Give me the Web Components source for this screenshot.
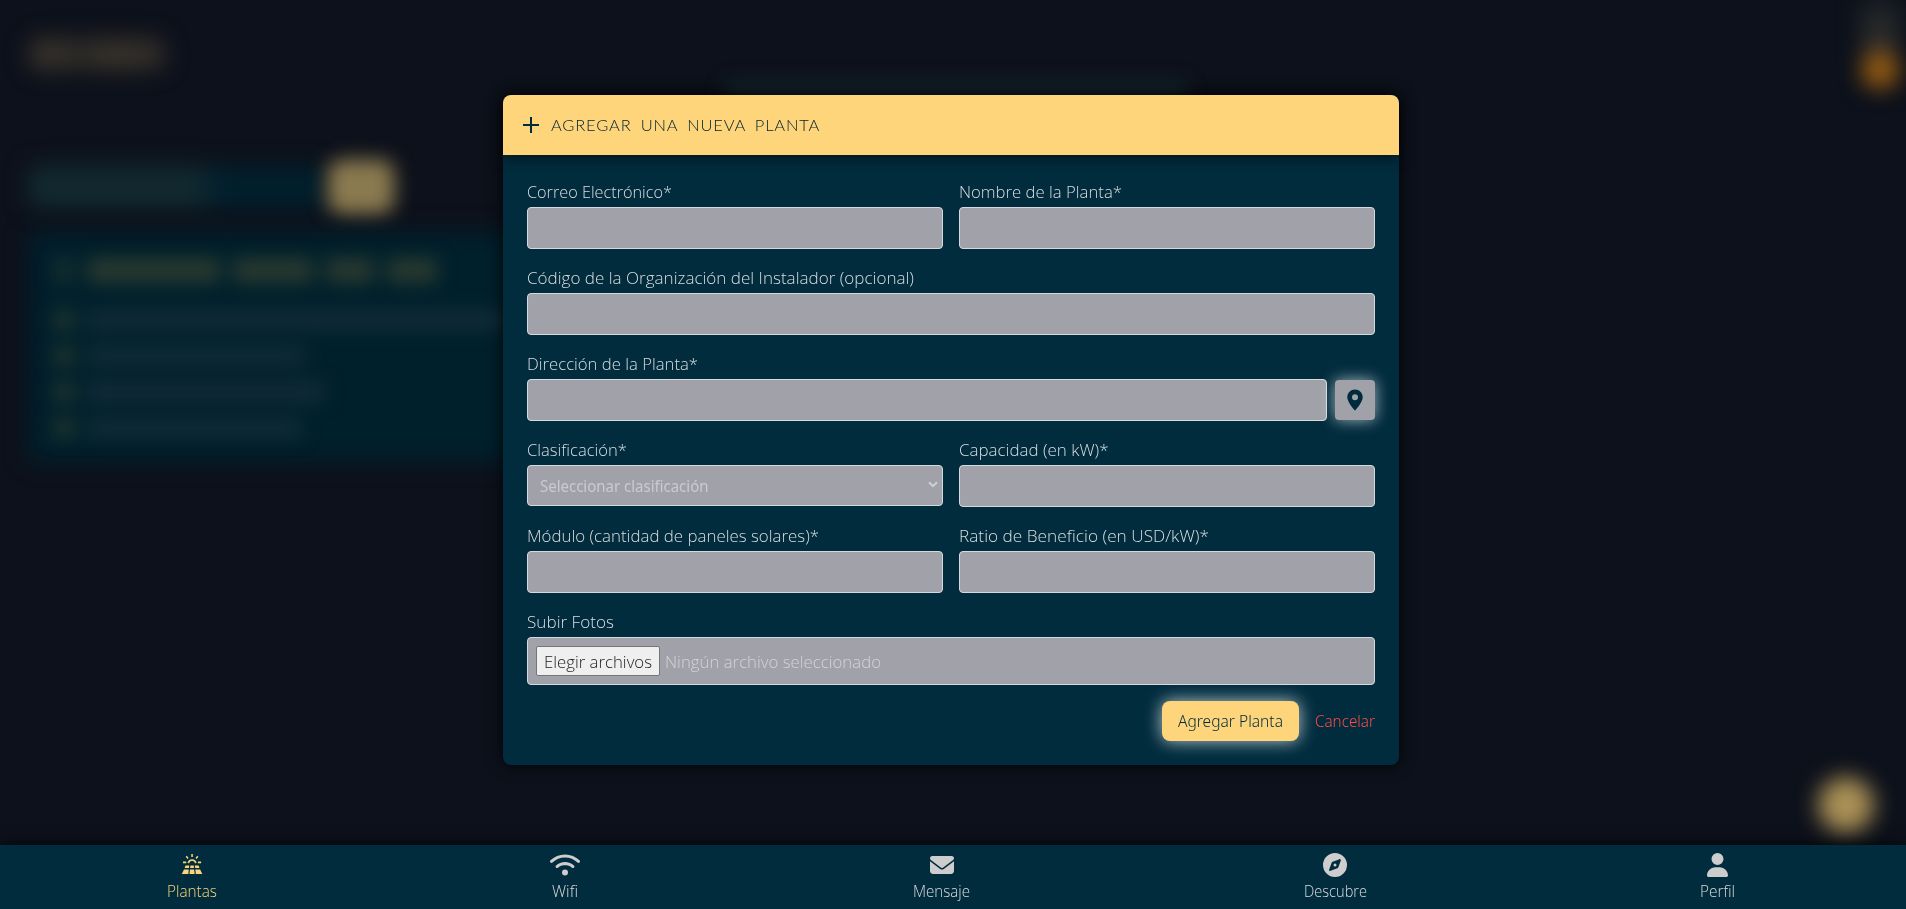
<!DOCTYPE html>
<html lang="es">
<head>
<meta charset="utf-8">
<title>Plantas</title>
<style>
html,body{margin:0;height:100%;overflow:hidden;background:#0d111b;font-family:"Open Sans","Noto Sans",sans-serif;font-size:16px;line-height:24px;color:#ccc}
</style>
</head>
<body>
<plant-app></plant-app>
<script>
const root = (el, html) => { const r = el.attachShadow({mode:'open'}); r.innerHTML = html; return r; };

// Text stretched so that it fills the width given in the w attribute.
customElements.define('fit-text', class extends HTMLElement {
  connectedCallback() {
    if (this.shadowRoot) return;
    const r = root(this, `<style>:host{display:inline-block;white-space:nowrap}span{display:inline-block;transform-origin:0 50%}</style><span><slot></slot></span>`);
    const s = r.querySelector('span'), w = +this.getAttribute('w');
    const k = w / s.getBoundingClientRect().width;
    this.style.width = w + 'px';
    s.style.transform = `scaleX(${k})`;
  }
});

customElements.define('form-field', class extends HTMLElement {
  connectedCallback() {
    if (this.shadowRoot) return;
    const kind = this.getAttribute('kind') || 'text';
    const boxes = {
      text: `<div class="box"></div>`,
      select: `<div class="box select"><fit-text w="168.5">Seleccionar clasificación</fit-text><svg width="10" height="7" viewBox="0 0 10 7"><path d="M1 1.2 5 5.2 9 1.2" fill="none" stroke="#d0d0d0" stroke-width="2"/></svg></div>`,
      address: `<div class="line"><div class="box"></div><button aria-label="Ubicación"><svg width="24" height="24" viewBox="0 0 24 24"><path fill="#002b3d" fill-rule="evenodd" d="M12 1.6c-4.3 0-7.7 3.4-7.7 7.6 0 5.4 7.7 13.3 7.7 13.3s7.7-7.9 7.7-13.3c0-4.2-3.4-7.6-7.7-7.6zm0 10.6a3 3 0 1 1 0-6 3 3 0 0 1 0 6z"/></svg></button></div>`,
      file: `<div class="box file"><span class="pick"><fit-text w="108">Elegir archivos</fit-text></span><span class="none"><fit-text w="216">Ningún archivo seleccionado</fit-text></span></div>`
    };
    root(this, `<style>
      :host{display:block;min-width:0}
      label{display:block;height:24px;margin-bottom:4px;line-height:27px;font-size:15.5px;color:#dadddf;font-weight:300}
      .box{box-sizing:border-box;height:42px;border:1px solid #d6dae0;border-radius:4px;background:#a1a1aa}
      .select{height:41px;display:flex;align-items:center;justify-content:space-between;padding:0 4px 0 12px;color:#cbcbce;font-family:"Noto Sans",sans-serif}
      .select svg{margin-top:-2px}
      .line{display:flex;gap:8px;align-items:center}
      .line .box{flex:1}
      button{width:40px;height:40px;border:0;border-radius:4px;padding:0;background:#a1a1aa;display:grid;place-items:center;box-shadow:0 0 15px rgba(255,255,255,.65)}
      .file{height:48px;display:flex;align-items:center;padding:0 8px;font-weight:300;font-size:15.5px}
      .pick{box-sizing:border-box;width:124px;height:30px;margin-top:-1px;border:1px solid #767676;border-radius:2px;background:#efefef;color:#222;padding-left:7px;line-height:31px}
      .none{margin:2px 0 0 5px;color:#d3d3d6}
    </style><label><slot></slot></label>${boxes[kind]}`);
  }
});

customElements.define('plant-dialog', class extends HTMLElement {
  connectedCallback() {
    root(this, `<style>
      :host{display:block;box-sizing:border-box;width:896px;height:670px;border-radius:8px;background:#002c3e;box-shadow:0 0 16px rgba(0,0,0,.85);overflow:visible}
      header{display:flex;align-items:center;height:60px;padding-left:20px;border-radius:8px 8px 0 0;background:#fed57a;color:#00222f;box-sizing:border-box;box-shadow:0 4px 14px rgba(0,0,0,.5)}
      header svg{margin-right:12px}
      h2{margin:-1px 0 0;font:300 16.5px/24px Lato,sans-serif;word-spacing:4px;letter-spacing:.8px}
      form{display:grid;grid-template-columns:1fr 1fr;gap:16px;padding:24px}
      .wide{grid-column:1/-1}
      footer{grid-column:1/-1;display:flex;justify-content:flex-end;align-items:center;gap:16px;font-family:"Noto Sans",sans-serif}
      .add{box-sizing:border-box;width:137px;height:40px;padding-left:16px;line-height:41px;border-radius:8px;background:#fed57a;color:#002b3d;font-weight:300;box-shadow:0 0 17px rgba(255,255,255,.75)}
      .cancel{color:#ff4848;font-weight:300;line-height:26px;margin-top:-1px}
    </style>
    <header><svg width="16" height="16" viewBox="0 0 16 16"><path d="M8 0v16M0 8h16" stroke="#002b3d" stroke-width="2"/></svg><h2><fit-text w="269">AGREGAR UNA NUEVA PLANTA</fit-text></h2></header>
    <form>
      <form-field><fit-text w="145">Correo Electrónico*</fit-text></form-field>
      <form-field><fit-text w="163">Nombre de la Planta*</fit-text></form-field>
      <form-field class="wide"><fit-text w="387">Código de la Organización del Instalador (opcional)</fit-text></form-field>
      <form-field class="wide" kind="address"><fit-text w="171">Dirección de la Planta*</fit-text></form-field>
      <form-field kind="select"><fit-text w="100">Clasificación*</fit-text></form-field>
      <form-field><fit-text w="149.5">Capacidad (en kW)*</fit-text></form-field>
      <form-field><fit-text w="292">Módulo (cantidad de paneles solares)*</fit-text></form-field>
      <form-field><fit-text w="250">Ratio de Beneficio (en USD/kW)*</fit-text></form-field>
      <form-field class="wide" kind="file"><fit-text w="87">Subir Fotos</fit-text></form-field>
      <footer><span class="add"><fit-text w="105">Agregar Planta</fit-text></span><span class="cancel"><fit-text w="60">Cancelar</fit-text></span></footer>
    </form>`);
  }
});

// Dimmed, out-of-focus page behind the dialog.
customElements.define('page-backdrop', class extends HTMLElement {
  connectedCallback() {
    const row = (w, color) => `<div class="row"><i class="dot"></i><i style="width:${w}px;background:${color}"></i></div>`;
    root(this, `<style>
      :host{display:flex;height:845px;overflow:hidden;background:#0d111b}
      i{display:block}
      .left{width:660px;padding:38px 0 0 29px;box-sizing:border-box}
      .title{width:136px;height:32px;background:linear-gradient(90deg,#37322b 20%,#2b2a27 38%,#39332b 58%,#302d29);filter:blur(11px);border-radius:10px}
      .search{display:flex;align-items:center;margin-top:88px;height:58px}
      .bar{width:294px;height:42px;background:linear-gradient(90deg,#122a30 0 165px,#00202d 195px);filter:blur(11px)}
      .go{width:66px;height:54px;border-radius:14px;margin-left:5px;background:radial-gradient(#84764e,#988453);filter:blur(10px)}
      .card{width:600px;height:230px;margin-top:16px;background:#00202c;filter:blur(11px)}
      .rows{position:relative;margin-top:-204px;padding-left:24px;filter:blur(9px)}
      .head{display:flex;gap:13px;margin-bottom:26px}
      .head i{height:25px;background:#28392f}
      .row{display:flex;gap:12px;align-items:center;height:22px;margin-bottom:14px}
      .row i{height:20px}
      .row .dot{width:22px;background:#1e342f}
      .right{display:flex;flex-direction:column;align-items:center;justify-content:space-between;width:130px;margin-left:auto;padding-bottom:12px;box-sizing:border-box}
      .top{display:flex;flex-direction:column;align-items:center;margin-left:77px;filter:blur(11px)}
      .tog{width:38px;height:51px;background:linear-gradient(#1b2026,#33302c)}
      .sun{width:38px;height:38px;border-radius:50%;background:#955b12}
      .fab{width:56px;height:56px;border-radius:50%;background:#ab9156;filter:blur(11px);margin-left:10px}
      .mid{width:460px;height:34px;margin:82px 0 0 66px;background:#12242a;filter:blur(9px)}
    </style>
    <div class="left"><i class="title"></i>
      <div class="search"><i class="bar"></i><i class="go"></i></div>
      <i class="card"></i>
      <div class="rows"><div class="head"><i style="width:22px;opacity:.5"></i><i style="width:132px"></i><i style="width:80px"></i><i style="width:48px"></i><i style="width:50px"></i></div>
      ${row(440,'#112b36')}${row(218,'#102b35')}${row(238,'#122b37')}${row(215,'#102b35')}</div>
    </div>
    <i class="mid"></i>
    <div class="right"><div class="top"><i class="tog"></i><i class="sun"></i></div><i class="fab"></i></div>`);
  }
});

customElements.define('nav-item', class extends HTMLElement {
  connectedCallback() {
    if (this.shadowRoot) return;
    const icons = {
      solar: `<svg width="24" height="24" viewBox="0 0 24 24" fill="currentColor"><path d="M11.3 1h1.5v3h-1.5zM5.7 3.8l1.2-1 1.7 2.3-1.2 1zM17.2 2.8l1.2 1-1.7 2.3-1.2-1zM3 8.6h3.2v1.6H3zM17.9 8.6h3.2v1.600h-3.2z"/><path d="M8.3 10.2a3.8 3.8 0 0 1 7.5 0" fill="none" stroke="currentColor" stroke-width="1.6"/><path d="M5.6 12.5h3.7l-.4 2.6H4.6zM10.5 12.5h3.2l.3 2.6h-3.9zM14.8 12.5h3.7l1 2.6h-4.3zM4 16.5h4.8l-.5 4.4H1.8zM10 16.5h4.1l.6 4.4H9.4zM15.3 16.5h4.8l2.2 4.4h-6.5z"/></svg>`,
      wifi: `<svg width="30" height="24" viewBox="0 0 640 512" fill="currentColor"><path d="M54.2 202.9C123.2 136.7 216.8 96 320 96s196.800 40.700 265.800 106.900c12.800 12.200 33 11.800 45.200-.9s11.800-33-.9-45.200C549.700 79.500 440.400 32 320 32S90.300 79.500 9.800 156.700C-2.900 169-3.300 189.200 8.900 202s32.500 13.200 45.200.9zM320 256c56.800 0 108.600 21.100 148.200 56 13.300 11.700 33.500 10.400 45.200-2.800s10.400-33.500-2.800-45.200C459.800 219.200 393 192 320 192s-139.800 27.200-190.500 72c-13.300 11.700-14.500 31.900-2.800 45.200s31.900 14.500 45.200 2.800c39.500-34.900 91.300-56 148.200-56zm64 160a64 64 0 1 0-128 0 64 64 0 1 0 128 0z"/></svg>`,
      mail: `<svg width="24" height="24" viewBox="0 0 512 512" fill="currentColor"><path d="M48 64C21.500 64 0 85.500 0 112c0 15.100 7.100 29.300 19.200 38.400l217.600 163.200c11.400 8.500 27 8.500 38.400 0l217.600-163.200c12.100-9.100 19.200-23.300 19.200-38.400 0-26.500-21.500-48-48-48H48zM0 176v208c0 35.300 28.700 64 64 64h384c35.300 0 64-28.700 64-64V176L294.400 339.200c-22.800 17.100-54 17.100-76.800 0L0 176z"/></svg>`,
      compass: `<svg width="24" height="24" viewBox="0 0 512 512" fill="currentColor"><path d="M256 512a256 256 0 1 0 0-512 256 256 0 1 0 0 512zm50.700-186.900L162.400 380.600c-19.400 7.500-38.500-11.600-31-31l55.500-144.300c3.300-8.500 9.900-15.100 18.400-18.400l144.300-55.500c19.400-7.500 38.500 11.600 31 31l-55.500 144.300c-3.200 8.500-9.900 15.100-18.400 18.400zM288 256a32 32 0 1 0-64 0 32 32 0 1 0 64 0z"/></svg>`,
      user: `<svg width="21" height="24" viewBox="0 0 448 512" fill="currentColor"><path d="M224 256a128 128 0 1 0 0-256 128 128 0 1 0 0 256zm-45.700 48C79.800 304 0 383.800 0 482.300 0 498.700 13.300 512 29.700 512h388.600c16.400 0 29.700-13.300 29.700-29.700 0-98.500-79.800-178.300-178.300-178.300h-91.400z"/></svg>`
    };
    root(this, `<style>
      :host{display:flex;flex-direction:column;align-items:center;color:#cdcdcd;padding-top:8px}
      :host([active]){color:#fed57a}
      svg{display:block}
      span{font:300 16px/24px "Open Sans",sans-serif;margin-top:2px}
      :host(:not([active])) span{color:#dcdcdc}
    </style>${icons[this.getAttribute('icon')]}<span><slot></slot></span>`);
  }
});

customElements.define('bottom-nav', class extends HTMLElement {
  connectedCallback() {
    root(this, `<style>
      :host{display:flex;justify-content:space-around;position:relative;height:64px;padding-right:4px;background:#002c3e;box-shadow:0 -2px 12px rgba(0,0,0,.6)}
    </style>
    <nav-item icon="solar" active><fit-text w="50">Plantas</fit-text></nav-item>
    <nav-item icon="wifi"><fit-text w="26">Wifi</fit-text></nav-item>
    <nav-item icon="mail"><fit-text w="57">Mensaje</fit-text></nav-item>
    <nav-item icon="compass"><fit-text w="63">Descubre</fit-text></nav-item>
    <nav-item icon="user"><fit-text w="35">Perfil</fit-text></nav-item>`);
  }
});

customElements.define('plant-app', class extends HTMLElement {
  connectedCallback() {
    root(this, `<style>
      :host{display:block;height:909px;overflow:hidden}
      .overlay{position:absolute;inset:0 0 49px;display:flex;align-items:center;justify-content:center}
      .overlay plant-dialog{margin-right:4px}
    </style>
    <page-backdrop></page-backdrop><bottom-nav></bottom-nav>
    <div class="overlay"><plant-dialog></plant-dialog></div>`);
  }
});
</script>
</body>
</html>
